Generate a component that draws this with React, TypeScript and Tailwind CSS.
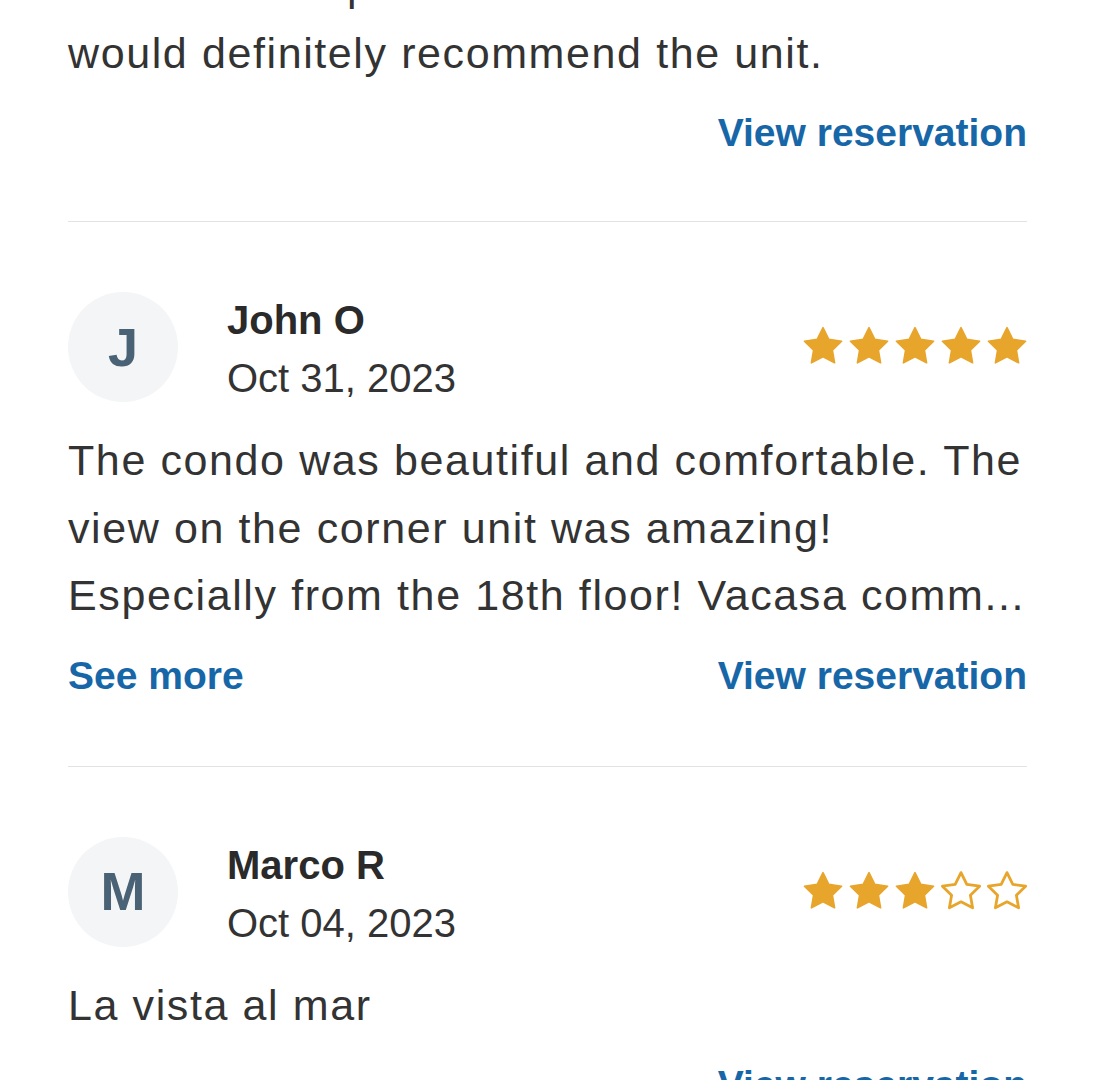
import React from 'react'

type Review = {
  initial: string
  name: string
  date: string
  text: string
  stars: number
  seeMore?: boolean
}

const reviews: Review[] = [
  {
    initial: 'J',
    name: 'John O',
    date: 'Oct 31, 2023',
    text: 'The condo was beautiful and comfortable. The view on the corner unit was amazing! Especially from the 18th floor! Vacasa comm...',
    stars: 5,
    seeMore: true,
  },
  {
    initial: 'M',
    name: 'Marco R',
    date: 'Oct 04, 2023',
    text: 'La vista al mar',
    stars: 3,
  },
]

function StarIcon({ filled }: { filled: boolean }) {
  return (
    <svg viewBox="2 2 20 20" className="h-[40px] w-[40px]">
      <polygon
        points="12,2.8 14.9,8.7 21.3,9.6 16.7,14.1 17.8,20.4 12,17.4 6.2,20.4 7.3,14.1 2.7,9.6 9.1,8.7"
        fill={filled ? '#e8a52c' : '#ffffff'}
        stroke="#e8a52c"
        strokeWidth={filled ? 0.8 : 1.4}
        strokeLinejoin="round"
      />
    </svg>
  )
}

function Stars({ count }: { count: number }) {
  return (
    <div className="mt-[34px] flex gap-[6px]">
      {[0, 1, 2, 3, 4].map((i) => (
        <StarIcon key={i} filled={i < count} />
      ))}
    </div>
  )
}

function LinkRow({ seeMore }: { seeMore?: boolean }) {
  return (
    <div className="mt-[22px] flex items-center justify-between text-[39px] font-bold leading-[48px] text-[#1767a8]">
      <span>{seeMore ? 'See more' : ''}</span>
      <span>View reservation</span>
    </div>
  )
}

function ReviewCard({ review }: { review: Review }) {
  return (
    <div className="border-t border-[#e2e2e2] pt-[70px] pb-[66px]">
      <div className="flex items-start justify-between">
        <div className="flex items-start gap-[49px]">
          <div className="flex h-[110px] w-[110px] items-center justify-center rounded-full bg-[#f3f5f7] text-[54px] font-bold text-[#4a6275]">
            {review.initial}
          </div>
          <div className="pt-[1px]">
            <div className="text-[40px] font-bold leading-[54px] text-[#2a2a2a]">{review.name}</div>
            <div className="text-[40px] leading-[62px] text-[#333333]">{review.date}</div>
          </div>
        </div>
        <Stars count={review.stars} />
      </div>
      <p className="mt-[18px] text-[43px] leading-[67.5px] tracking-[1.6px] text-[#333333]">{review.text}</p>
      <LinkRow seeMore={review.seeMore} />
    </div>
  )
}

export default function App() {
  return (
    <div className="h-[1080px] overflow-hidden bg-white" style={{ fontFamily: '"Liberation Sans", Arial, sans-serif' }}>
      <div className="mx-[68px] -mt-[48px]">
        <div className="pb-[64px]">
          <p className="text-[43px] leading-[67.5px] tracking-[1.6px] text-[#333333]">
            The check-in process was excellent. We
            <br />
            would definitely recommend the unit.
          </p>
          <LinkRow />
        </div>
        {reviews.map((r) => (
          <ReviewCard key={r.name} review={r} />
        ))}
      </div>
    </div>
  )
}
